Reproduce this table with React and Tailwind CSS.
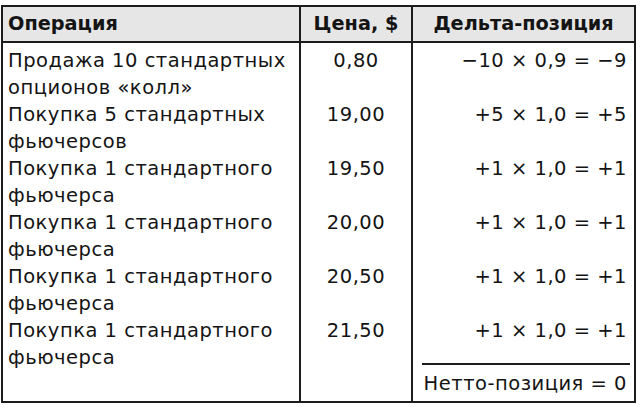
export default function App() {
  const rows = [
    ["Продажа 10 стандартных", "опционов «колл»", "0,80", "−10 × 0,9 = −9"],
    ["Покупка 5 стандартных", "фьючерсов", "19,00", "+5 × 1,0 = +5"],
    ["Покупка 1 стандартного", "фьючерса", "19,50", "+1 × 1,0 = +1"],
    ["Покупка 1 стандартного", "фьючерса", "20,00", "+1 × 1,0 = +1"],
    ["Покупка 1 стандартного", "фьючерса", "20,50", "+1 × 1,0 = +1"],
    ["Покупка 1 стандартного", "фьючерса", "21,50", "+1 × 1,0 = +1"],
  ];
  return (
    <div className="w-[640px] h-[408px] bg-white pt-[5px] pl-[1px]" style={{ fontFamily: '"DejaVu Sans", sans-serif' }}>
      <div className="w-[635px] h-[398px] border-2 border-[#1c1c1c] flex flex-col text-[#141414]">
        <div className="grid grid-cols-[296px_2px_110px_2px_1fr] h-[36px] bg-[#e6e6e6] border-b-2 border-[#1c1c1c] font-bold text-[19.3px] leading-[34px]">
          <div className="pl-[5px]">Операция</div>
          <div className="bg-[#1c1c1c]" />
          <div className="text-center">Цена, $</div>
          <div className="bg-[#1c1c1c]" />
          <div className="text-center">Дельта-позиция</div>
        </div>
        <div className="flex-1 grid grid-cols-[296px_2px_110px_2px_1fr] text-[19.5px] leading-[27px] tracking-[0.5px]">
          <div className="pl-[5px] pt-[4px] whitespace-nowrap">
            {rows.map((r, i) => (
              <div key={i}>
                <div>{r[0]}</div>
                <div>{r[1]}</div>
              </div>
            ))}
          </div>
          <div className="bg-[#1c1c1c]" />
          <div className="pt-[4px] text-center">
            {rows.map((r, i) => (
              <div key={i} className="h-[54px]">{r[2]}</div>
            ))}
          </div>
          <div className="bg-[#1c1c1c]" />
          <div className="pt-[4px] pr-[7px] text-right flex flex-col whitespace-nowrap">
            {rows.map((r, i) => (
              <div key={i} className="h-[54px]">{r[3]}</div>
            ))}
            <div className="-mt-[8px] ml-[9px] mr-[-3px] border-t-2 border-[#1c1c1c] pt-[5px] pr-[3px]">Нетто-позиция = 0</div>
          </div>
        </div>
      </div>
    </div>
  );
}
